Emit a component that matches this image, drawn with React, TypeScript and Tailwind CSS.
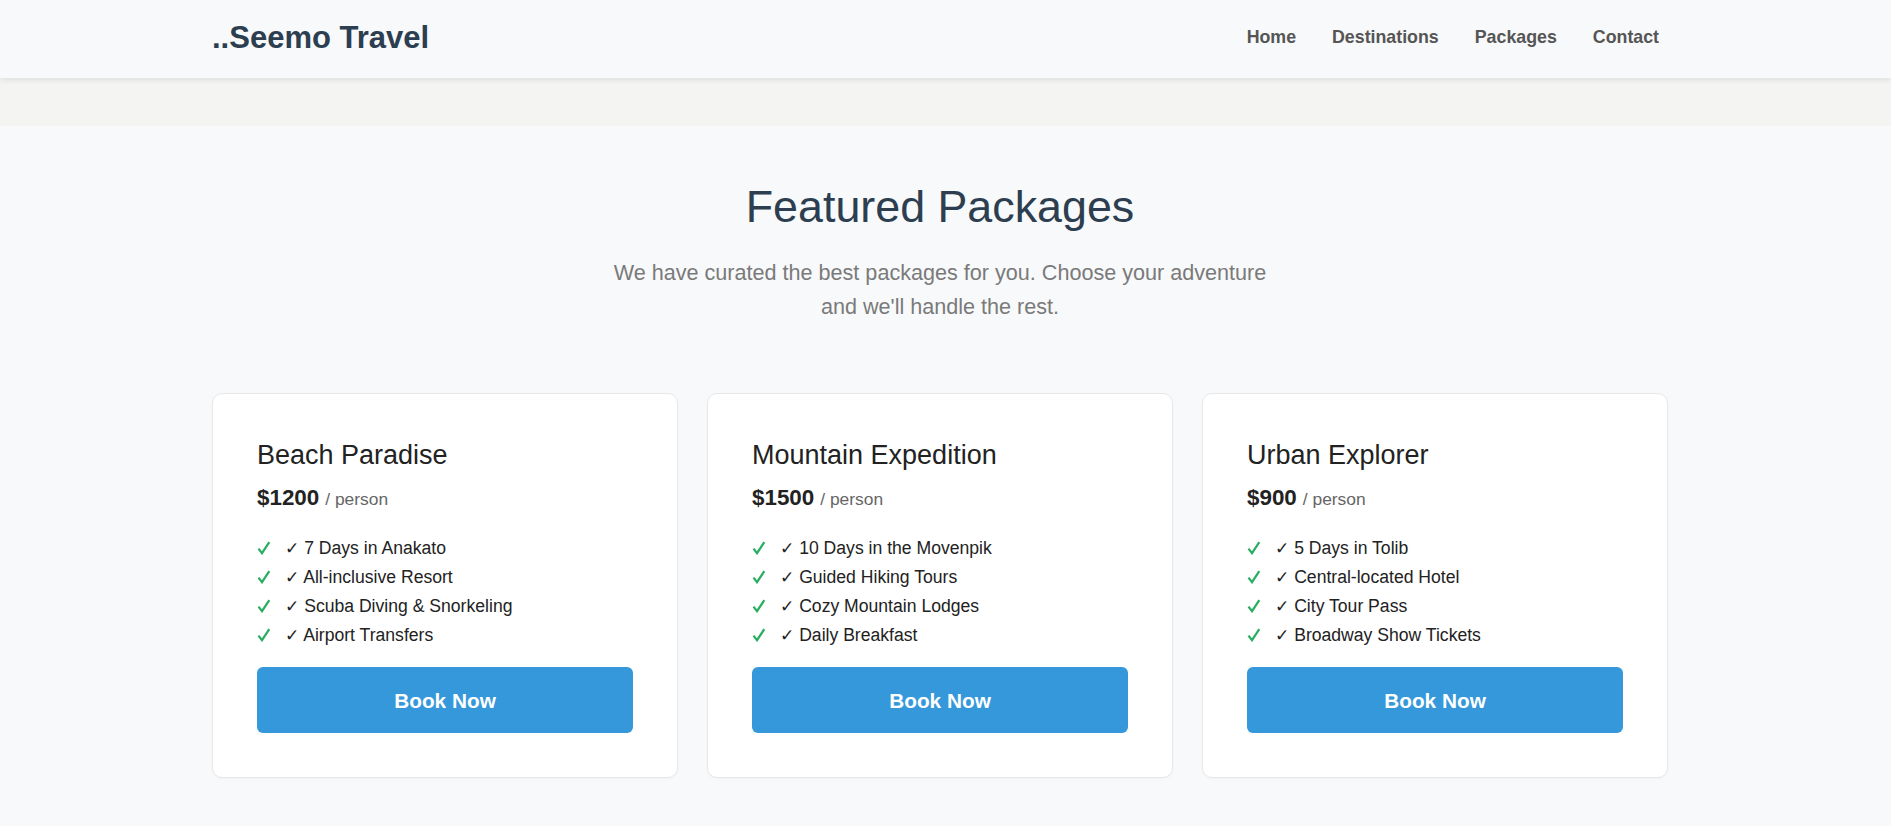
import React from "react";

const packages = [
  {
    title: "Beach Paradise",
    price: "$1200",
    features: ["7 Days in Anakato", "All-inclusive Resort", "Scuba Diving & Snorkeling", "Airport Transfers"],
  },
  {
    title: "Mountain Expedition",
    price: "$1500",
    features: ["10 Days in the Movenpik", "Guided Hiking Tours", "Cozy Mountain Lodges", "Daily Breakfast"],
  },
  {
    title: "Urban Explorer",
    price: "$900",
    features: ["5 Days in Tolib", "Central-located Hotel", "City Tour Pass", "Broadway Show Tickets"],
  },
];

const font = { fontFamily: '"Liberation Sans", Arial, Helvetica, sans-serif' };

function GreenCheck() {
  return (
    <svg width="14" height="14" viewBox="0 0 14 14" className="mr-[14px] shrink-0">
      <path d="M1.5 7.6 L5 12.2 L12.3 1.2" fill="none" stroke="#27ae60" strokeWidth="2.2" strokeLinejoin="miter" />
    </svg>
  );
}

export default function App() {
  return (
    <div className="min-h-[826px] bg-[#f8f9fa]" style={font}>
      <header className="relative z-10 h-[78px] bg-[#f8f9fa] shadow-[0_2px_6px_rgba(0,0,0,0.09)]">
        <div className="ml-[212px] flex h-full w-[1456px] items-center justify-between pb-[3px]">
          <div className="text-[31px] font-bold leading-none text-[#2c3e50]">..Seemo Travel</div>
          <nav className="flex gap-[36px] pr-[9px] text-[17.8px] font-bold text-[#555555]">
            <a href="#">Home</a>
            <a href="#">Destinations</a>
            <a href="#">Packages</a>
            <a href="#">Contact</a>
          </nav>
        </div>
      </header>
      <div className="h-[48px] bg-[#f4f5f3]" />
      <section className="pt-[54px] pb-[48px]">
        <div className="ml-[212px] w-[1456px]">
          <h2 className="text-center text-[44.8px] leading-[1.2] font-normal text-[#2c3e50]">Featured Packages</h2>
          <p className="mx-auto mt-[22px] max-w-[680px] text-center text-[21.6px] leading-[1.6] text-[#7a7a7a]">
            We have curated the best packages for you. Choose your adventure and we'll handle the rest.
          </p>
          <div className="mt-[68px] grid grid-cols-3 gap-[29px]">
            {packages.map((p) => (
              <div
                key={p.title}
                className="rounded-[10px] border border-[#e6e8ea] bg-white px-[44px] pt-[45px] pb-[44px] shadow-[0_1px_3px_rgba(0,0,0,0.03)]"
              >
                <h3 className="text-[27px] leading-[1.2] font-normal text-[#222222]">{p.title}</h3>
                <div className="mt-[10px] leading-[33.6px]">
                  <span className="text-[22.4px] font-bold text-[#222222]">{p.price}</span>
                  <span className="ml-[6px] text-[17.4px] text-[#666666]">/ person</span>
                </div>
                <ul className="mt-[17px]">
                  {p.features.map((f) => (
                    <li key={f} className="flex h-[28.9px] items-center overflow-hidden text-[17.6px] leading-[28.9px] text-[#222222]">
                      <GreenCheck />
                      <span className="whitespace-nowrap">
                        <span className="font-['DejaVu_Sans'] text-[17px] leading-none">✓</span> {f}
                      </span>
                    </li>
                  ))}
                </ul>
                <button className="mt-[18px] flex h-[66px] w-full items-center justify-center rounded-[6px] bg-[#3498db] text-[20.8px] font-bold text-white">
                  Book Now
                </button>
              </div>
            ))}
          </div>
        </div>
      </section>
    </div>
  );
}
